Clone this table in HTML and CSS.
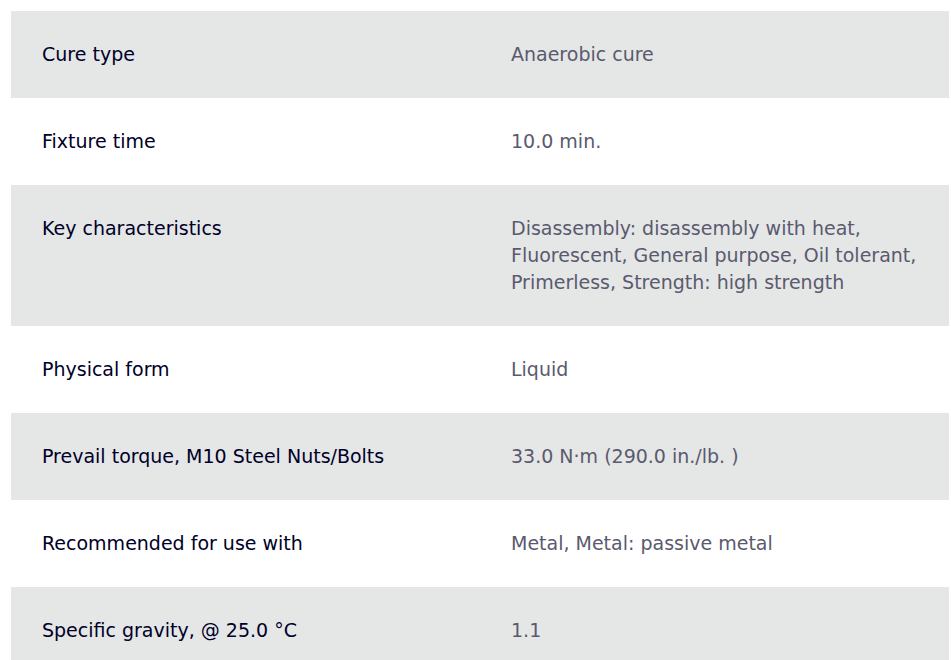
FILE: index.html
```html
<!DOCTYPE html>
<html lang="en">
<head>
<meta charset="utf-8">
<title>Specifications</title>
<link rel="stylesheet" href="styles.css">
</head>
<body>
<div class="page">
  <table class="specs">
    <tbody>
      <tr class="alt"><th>Cure type</th><td>Anaerobic cure</td></tr>
      <tr><th>Fixture time</th><td>10.0 min.</td></tr>
      <tr class="alt"><th>Key characteristics</th><td>Disassembly: disassembly with heat, Fluorescent, General purpose, Oil tolerant, Primerless, Strength: high strength</td></tr>
      <tr><th>Physical form</th><td>Liquid</td></tr>
      <tr class="alt"><th>Prevail torque, M10 Steel Nuts/Bolts</th><td>33.0 N·m (290.0 in./lb. )</td></tr>
      <tr><th>Recommended for use with</th><td>Metal, Metal: passive metal</td></tr>
      <tr class="alt"><th>Specific gravity, @ 25.0 °C</th><td>1.1</td></tr>
    </tbody>
  </table>
</div>
</body>
</html>
```
FILE: styles.css
```css
html, body {
  margin: 0;
  padding: 0;
  background: #ffffff;
}
.page {
  padding: 11px 0 0 11px;
}
.specs {
  width: 938px;
  border-collapse: collapse;
  table-layout: fixed;
  font-family: "DejaVu Sans", "Open Sans", sans-serif;
  font-size: 19px;
  line-height: 27px;
}
.specs th,
.specs td {
  padding: 30px 31px;
  text-align: left;
  vertical-align: top;
  font-weight: 400;
}
.specs th {
  color: #000028;
}
.specs td {
  color: #5a5a6e;
}
.specs tr.alt {
  background: #e5e6e6;
}
```
